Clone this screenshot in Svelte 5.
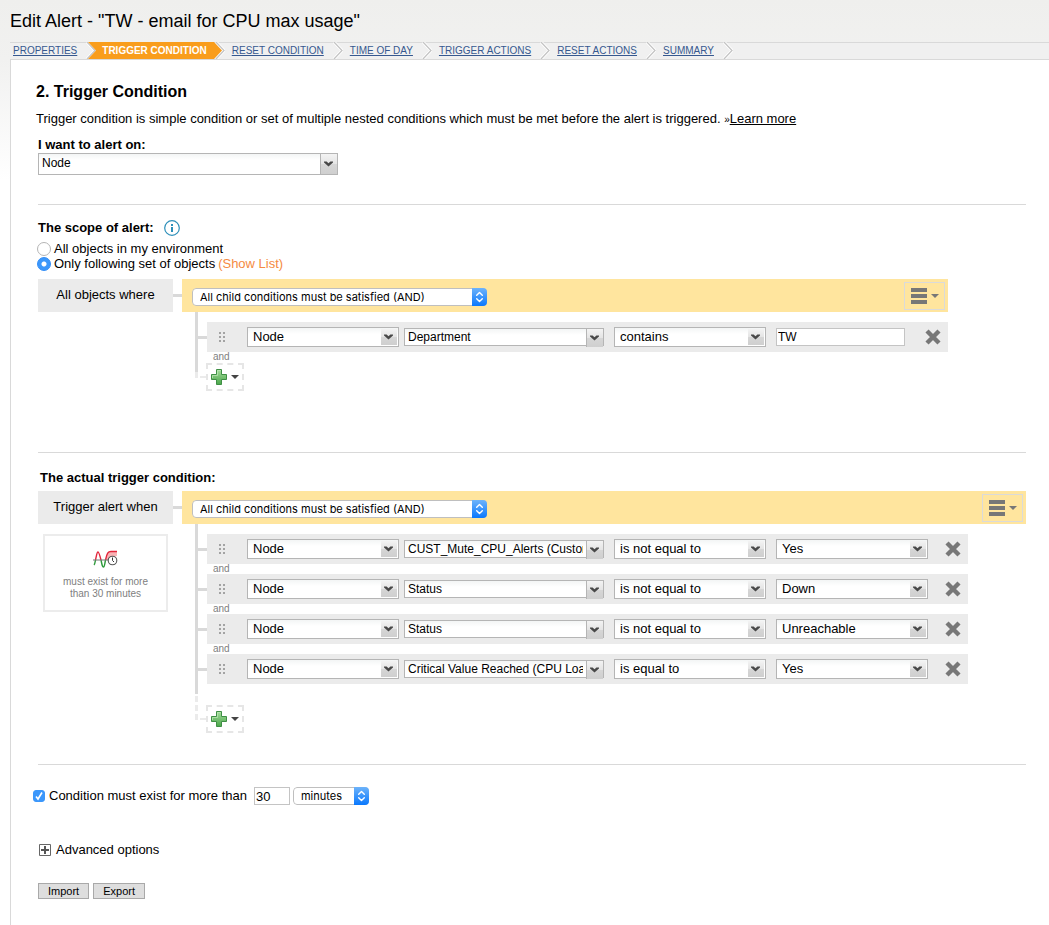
<script lang="ts">
    type Condition = { object: string; field: string; operator: string; value: string };

    const steps = ['Properties', 'Trigger Condition', 'Reset Condition', 'Time of Day', 'Trigger Actions', 'Reset Actions', 'Summary'];
    const fields = ['Department', 'Status', 'CUST_Mute_CPU_Alerts (Custom)', 'Critical Value Reached (CPU Load)'];
    const operators = ['contains', 'is equal to', 'is not equal to'];
    const values = ['Yes', 'No', 'Down', 'Unreachable'];

    let currentStep = $state('Trigger Condition');
    let alertOn = $state('Node');
    let scopeType = $state('set');
    let mustExist = $state(true);
    let duration = $state('30');
    let unit = $state('minutes');

    let scope = $state({
        match: 'and',
        freeText: true,
        rows: [{ object: 'Node', field: 'Department', operator: 'contains', value: 'TW' }] as Condition[],
    });

    let trigger = $state({
        match: 'and',
        freeText: false,
        rows: [
            { object: 'Node', field: 'CUST_Mute_CPU_Alerts (Custom)', operator: 'is not equal to', value: 'Yes' },
            { object: 'Node', field: 'Status', operator: 'is not equal to', value: 'Down' },
            { object: 'Node', field: 'Status', operator: 'is not equal to', value: 'Unreachable' },
            { object: 'Node', field: 'Critical Value Reached (CPU Load)', operator: 'is equal to', value: 'Yes' },
        ] as Condition[],
    });

    function addRow(group: { rows: Condition[] }) {
        group.rows.push({ object: 'Node', field: 'Status', operator: 'is equal to', value: 'Yes' });
    }
</script>

{#snippet arrow()}
    <span class="arrow">
        <svg width="9" height="6" viewBox="0 0 9 6"><path d="M0 0.5h2.6l1.9 1.7 1.9-1.7H9v1L4.5 5.6 0 1.5z" fill="#484848" /></svg>
    </span>
{/snippet}

{#snippet stepper()}
    <span class="stepper">
        <svg width="9" height="12" viewBox="0 0 9 12" fill="none" stroke="#fff" stroke-width="1.4" stroke-linecap="round" stroke-linejoin="round">
            <path d="M1.7 4.3L4.5 1.5l2.8 2.8M1.7 7.7l2.8 2.8 2.8-2.8" />
        </svg>
    </span>
{/snippet}

{#snippet caret(color: string)}
    <svg width="8" height="4" viewBox="0 0 8 4"><path d="M0 0h8L4 4z" fill={color} /></svg>
{/snippet}

{#snippet conditionGroup(group: { match: string; freeText: boolean; rows: Condition[] })}
    <div class="group" class:wide={!group.freeText}>
        <div class="group-head">
            <span class="mac-select match">
                <select bind:value={group.match} aria-label="Match type">
                    <option value="and">All child conditions must be satisfied (AND)</option>
                    <option value="or">At least one child condition must be satisfied (OR)</option>
                </select>
                {@render stepper()}
            </span>
            <button class="menu" aria-label="Group menu">
                <svg width="16" height="16" viewBox="0 0 16 16"><path d="M0 0h16v4H0zM0 6h16v4H0zM0 12h16v4H0z" fill="#777" /></svg>
                {@render caret('#777')}
            </button>
        </div>
        <ul class="tree">
            {#each group.rows as row, i}
                <li>
                    <span class="branch"></span>
                    <div class="row">
                        <svg class="grip" width="8" height="10" viewBox="0 0 8 10">
                            <path d="M1 0h2v2H1zM5 0h2v2H5zM1 4h2v2H1zM5 4h2v2H5zM1 8h2v2H1zM5 8h2v2H5z" fill="#a3a3a3" />
                        </svg>
                        <span class="combo">
                            <select bind:value={row.object} aria-label="Object">
                                <option>Node</option>
                                <option>Interface</option>
                            </select>
                            {@render arrow()}
                        </span>
                        <span class="combo field">
                            <select bind:value={row.field} aria-label="Field">
                                {#each fields as f}<option>{f}</option>{/each}
                            </select>
                            {@render arrow()}
                        </span>
                        <span class="combo operator">
                            <select bind:value={row.operator} aria-label="Operator">
                                {#each operators as o}<option>{o}</option>{/each}
                            </select>
                            {@render arrow()}
                        </span>
                        {#if group.freeText}
                            <input class="text" type="text" bind:value={row.value} aria-label="Value" />
                        {:else}
                            <span class="combo">
                                <select bind:value={row.value} aria-label="Value">
                                    {#each values as v}<option>{v}</option>{/each}
                                </select>
                                {@render arrow()}
                            </span>
                        {/if}
                        <button class="remove" aria-label="Remove condition" onclick={() => group.rows.splice(i, 1)}>
                            <svg width="16" height="16" viewBox="0 0 16 16"><path d="M2 2l12 12M14 2L2 14" stroke="#777" stroke-width="4.4" /></svg>
                        </button>
                    </div>
                </li>
                {#if group.freeText || i < group.rows.length - 1}
                    <li class="and">and</li>
                {/if}
            {/each}
        </ul>
        <div class="add-row">
            {#if group.freeText}
                <svg width="11" height="16" viewBox="0 0 11 16">
                    <path d="M0 0h3v10H0z" fill="#d9d9d9" />
                    <path d="M0 10h3v6H0zM5 14h6v2H5z" fill="#ebebeb" />
                </svg>
            {:else}
                <svg width="11" height="36" viewBox="0 0 11 36">
                    <path d="M0 0h3v10H0z" fill="#d9d9d9" />
                    <path d="M0 12h3v6H0zM0 21h3v6H0zM0 30h3v6H0zM5 34h6v2H5z" fill="#ebebeb" />
                </svg>
            {/if}
            <button class="add" aria-label="Add condition" onclick={() => addRow(group)}>
                <svg width="16" height="16" viewBox="0 0 16 16">
                    <defs>
                        <linearGradient id="plus" x1="0" y1="0" x2="0" y2="1">
                            <stop offset="0" stop-color="#a5dc9c" />
                            <stop offset="1" stop-color="#4aa64a" />
                        </linearGradient>
                    </defs>
                    <path d="M5.5 0.5h5v5h5v5h-5v5h-5v-5h-5v-5h5z" fill="url(#plus)" stroke="#3f8f45" />
                    <path d="M1.500 9V6.500h5v-5h3" fill="none" stroke="#b9e6b0" stroke-width="0.8" />
                </svg>
                {@render caret('#444')}
            </button>
        </div>
    </div>
{/snippet}

<header>
    <h1>Edit Alert - "TW - email for CPU max usage"</h1>
    <nav>
        {#each steps as step, i}
            <a href="#{step}" class:active={step === currentStep} onclick={() => (currentStep = step)}>{step}</a>
            <svg width="11" height="17" viewBox="0 0 11 17">
                <path d="M2 0l8 8.500L2 17" fill="none" stroke="#fff" stroke-width="3" />
                <path d="M2 0l8 8.500L2 17" fill="none" stroke="#c4c4c4" stroke-width="1.3" />
                {#if step === currentStep}
                    <path d="M0 0l8 8.500L0 17z" fill="#f99d1c" />
                {:else if steps[i + 1] === currentStep}
                    <path d="M3 0h8v17H3l8-8.500z" fill="#f99d1c" />
                {/if}
            </svg>
        {/each}
    </nav>
</header>

<main>
    <h2>2. Trigger Condition</h2>
    <p class="intro">
        Trigger condition is simple condition or set of multiple nested conditions which must be met before the alert is triggered.
        <small>»</small><a href="#learn">Learn more</a>
    </p>

    <section class="alert-on">
        <label for="alert-on">I want to alert on:</label>
        <span class="combo large">
            <select id="alert-on" bind:value={alertOn}>
                <option>Node</option>
                <option>Interface</option>
                <option>Volume</option>
            </select>
            {@render arrow()}
        </span>
    </section>

    <section class="scope">
        <h3>
            The scope of alert:
            <svg width="16" height="16" viewBox="0 0 16 16">
                <circle cx="8" cy="8" r="7.300" fill="#fff" stroke="#2d8fb9" stroke-width="1.2" />
                <path d="M7 4h2v2H7zM7 7h2v5H7z" fill="#2d8fb9" />
            </svg>
        </h3>
        <label class="option"><input type="radio" value="all" bind:group={scopeType} />All objects in my environment</label>
        <div class="option">
            <label class="option"><input type="radio" value="set" bind:group={scopeType} />Only following set of objects</label>
            <a class="show-list" href="#list">(Show List)</a>
        </div>
        <div class="builder">
            <div class="side">
                <div class="caption">All objects where</div>
            </div>
            <span class="link"></span>
            {@render conditionGroup(scope)}
        </div>
    </section>

    <section class="trigger">
        <h3>The actual trigger condition:</h3>
        <div class="builder">
            <div class="side">
                <div class="caption">Trigger alert when</div>
                <div class="summary">
                    <svg width="26" height="20" viewBox="0 0 26 20" fill="none">
                        <path d="M12.500 10C14 3 15 1.500 18 1.500h6V6l-6 1-3 3z" fill="#f9b3b5" />
                        <path d="M2.500 10C4 3 4 2 5 2s1.500 2 3 8M12.500 10C14 3 15 1.500 18 1.500h6" stroke="#e3263c" stroke-width="1.4" />
                        <path d="M1 15c.8-.6 1-2 1.500-5M8 10c1.200 6 1.500 7 2.500 7s1-2 2-7" stroke="#2c9a3a" stroke-width="1.4" />
                        <path d="M0 10h16" stroke="#777" />
                        <circle cx="19.500" cy="10.500" r="4.300" fill="#fff" stroke="#555" stroke-width="1.1" />
                        <path d="M19.500 7.500v3l1.500 1.500" stroke="#333" />
                    </svg>
                    <span>must exist for more than 30 minutes</span>
                </div>
            </div>
            <span class="link"></span>
            {@render conditionGroup(trigger)}
        </div>
    </section>

    <section class="options">
        <div class="duration">
            <label><input type="checkbox" bind:checked={mustExist} />Condition must exist for more than</label>
            <input class="text short" type="text" bind:value={duration} aria-label="Duration" />
            <span class="mac-select unit">
                <select bind:value={unit} aria-label="Unit">
                    <option>seconds</option>
                    <option>minutes</option>
                    <option>hours</option>
                </select>
                {@render stepper()}
            </span>
        </div>
        <button class="advanced">
            <svg width="12" height="12" viewBox="0 0 12 12">
                <path d="M0.500 0.500h11v11h-11z" fill="#fff" stroke="#666" />
                <path d="M5 2h2v3h3v2H7v3H5V7H2V5h3z" fill="#555" />
            </svg>
            Advanced options
        </button>
        <div class="buttons">
            <button>Import</button>
            <button>Export</button>
        </div>
    </section>
</main>

<style>
    :global(body) {
        background: linear-gradient(#efefed, #f1f1f0 60px, #fff 180px) no-repeat;
        font: 13px/16px "Liberation Sans", Arial, sans-serif;
        color: #000;
    }

    h1, h2, h3, p, ul {
        margin: 0;
        padding: 0;
    }

    svg {
        display: block;
        flex: none;
    }

    button, select, input {
        font: inherit;
        color: inherit;
        box-sizing: border-box;
        margin: 0;
    }

    button {
        padding: 0;
        border: none;
        background: none;
        cursor: pointer;
    }

    header {
        padding-left: 10px;
    }

    h1 {
        font-size: 18px;
        font-weight: normal;
        line-height: 42px;
    }

    /* Wizard steps */
    nav {
        display: flex;
        height: 17px;
        background: #f0f0f0;
        box-shadow: inset 0 1px #d9d9d9;
    }

    nav a {
        padding: 0 8px 0 7px;
        font-size: 10px;
        line-height: 17px;
        text-transform: uppercase;
        white-space: nowrap;
        color: #36588f;
    }

    nav a:first-child {
        padding-left: 3px;
    }

    nav a.active {
        padding: 0 7px 0 6px;
        background: #f99d1c;
        color: #fff;
        font-weight: bold;
        text-decoration: none;
    }

    main {
        box-sizing: border-box;
        min-height: calc(100vh - 59px);
        margin-left: 10px;
        padding: 22px 23px 26px 25px;
        border: solid #d9d9d9;
        border-width: 1px 0 0 1px;
        background: #fff;
    }

    h2 {
        font-size: 16px;
        line-height: 20px;
    }

    h3 {
        display: flex;
        align-items: center;
        gap: 10px;
        margin-bottom: 5px;
        font-size: 13px;
    }

    .intro {
        margin-top: 9px;
    }

    .intro small {
        font-size: 10px;
        line-height: 10px;
    }

    .intro a {
        color: #000;
    }

    section {
        margin-left: 2px;
    }

    section + section {
        border-top: 1px solid #d9d9d9;
    }

    .alert-on {
        margin-top: 10px;
        padding-bottom: 29px;
    }

    .alert-on label {
        display: block;
        font-weight: bold;
    }

    .scope {
        padding: 15px 0 61px;
    }

    .trigger {
        padding: 17px 0 31px;
    }

    .trigger h3 {
        margin-left: 2px;
    }

    .option {
        display: flex;
        align-items: center;
        line-height: 15px;
    }

    .show-list {
        margin-left: 3px;
        color: #f58a42;
        text-decoration: none;
    }

    input[type="radio"],
    input[type="checkbox"] {
        appearance: none;
        flex: none;
        background: #fff;
        border: 1px solid #b5b5b5;
    }

    input[type="radio"] {
        width: 14px;
        height: 14px;
        margin: 0 3px 0 -1px;
        border-radius: 50%;
    }

    input[type="radio"]:checked {
        border-color: #2f8cf7;
        background: radial-gradient(circle, #fff 2px, #3b97fb 3px);
    }

    input[type="checkbox"] {
        width: 12px;
        height: 12px;
        margin-right: 4px;
        border-radius: 3px;
    }

    input[type="checkbox"]:checked {
        border-color: #3b97fb;
        background: #3b97fb url("data:image/svg+xml,%3Csvg xmlns='http://www.w3.org/2000/svg' viewBox='0 0 10 10'%3E%3Cpath d='M2 5.500l2 2.500 4-6.500' fill='none' stroke='%23fff' stroke-width='1.600'/%3E%3C/svg%3E");
    }

    /* Condition builder */
    .builder {
        display: flex;
        align-items: flex-start;
    }

    .option + .builder {
        margin-top: 8px;
    }

    .side {
        flex: none;
        width: 135px;
    }

    .caption {
        height: 33px;
        line-height: 32px;
        background: #ebebeb;
        text-align: center;
    }

    .summary {
        display: flex;
        flex-direction: column;
        align-items: center;
        gap: 6px;
        box-sizing: border-box;
        height: 78px;
        margin: 10px 5px 0;
        padding: 14px 16px 0;
        border: 2px solid #ececec;
        font-size: 10px;
        line-height: 12px;
        text-align: center;
        color: #808080;
    }

    .link,
    .branch {
        flex: none;
        width: 9px;
        height: 3px;
        background: #d9d9d9;
    }

    .link {
        margin-top: 15px;
    }

    .group.wide {
        flex: 1;
    }

    .group-head {
        display: flex;
        align-items: center;
        justify-content: space-between;
        height: 33px;
        padding: 0 3px 0 10px;
        box-sizing: border-box;
        background: #ffe59e;
    }

    .menu {
        display: flex;
        align-items: center;
        justify-content: center;
        gap: 4px;
        width: 41px;
        height: 28px;
        border: 1px solid #dadada;
    }

    .tree {
        margin-left: 13px;
        padding-top: 10px;
        border-left: 3px solid #d9d9d9;
        list-style: none;
    }

    .tree li {
        display: flex;
        align-items: center;
    }

    .tree .and {
        height: 10px;
        padding-left: 15px;
        font-size: 10px;
        line-height: 10px;
        color: #808080;
    }

    .row {
        display: flex;
        align-items: center;
        height: 30px;
        padding: 0 7px 0 11px;
        background: #ebebeb;
    }

    .grip {
        margin-right: 21px;
    }

    .combo,
    .mac-select {
        display: grid;
        box-sizing: border-box;
    }

    .combo select,
    .mac-select select {
        grid-area: 1 / 1;
        appearance: none;
        min-width: 0;
        width: 100%;
        border: none;
        border-radius: 0;
        background: none;
        outline: none;
    }

    .combo {
        width: 152px;
        height: 20px;
        border: 1px solid #b5b5b5;
        background: linear-gradient(#f3f5f5, #fff 6px);
    }

    .combo select {
        padding: 0 20px 0 5px;
    }

    .arrow,
    .stepper {
        grid-area: 1 / 1;
        justify-self: end;
        display: flex;
        align-items: center;
        justify-content: center;
        pointer-events: none;
    }

    .arrow {
        width: 15px;
        margin: 1px;
        padding-right: 1px;
        background: linear-gradient(#f3f3f3, #e4e4e4 50%, #d6d6d6 50%, #cfcfcf);
    }

    .combo.large {
        width: 300px;
        height: 22px;
        font-size: 12px;
    }

    .combo.field {
        width: 200px;
        height: 18px;
        margin: 0 10px 0 5px;
        font-size: 12px;
    }

    .combo.operator {
        margin-right: 10px;
    }

    .combo.large select,
    .combo.field select {
        padding: 0 20px 2px 3px;
    }

    .combo.large .arrow,
    .combo.field .arrow {
        margin: 0;
        border-left: 1px solid #b5b5b5;
    }

    .text {
        width: 129px;
        height: 18px;
        margin-right: 3px;
        padding: 0 1px;
        border: 1px solid #c4c4c4;
        background: #fff;
        font-size: 12px;
    }

    .remove {
        margin-left: 17px;
    }

    .mac-select {
        height: 18px;
        border-radius: 4px;
        overflow: hidden;
        font: 11px/14px Inter, sans-serif;
    }

    .mac-select select {
        padding: 0 18px 0 7px;
        border: 1px solid #bfbfbf;
        border-radius: 4px;
        background: #fff;
    }

    .match {
        width: 295px;
        margin-top: 2px;
    }

    .unit {
        width: 76px;
    }

    .stepper {
        width: 15px;
        background: linear-gradient(#6db3fa, #0a78fd);
    }

    .add-row {
        display: flex;
        align-items: flex-start;
        margin-left: 13px;
    }

    .add {
        display: flex;
        align-items: center;
        justify-content: center;
        gap: 4px;
        width: 38px;
        height: 28px;
        margin-top: 1px;
        border: 2px dashed #e6e6e6;
    }

    .wide .add {
        margin-top: 21px;
    }

    .options {
        padding-top: 22px;
    }

    .duration {
        display: flex;
        align-items: center;
        margin-left: -5px;
    }

    .duration label {
        display: flex;
        align-items: center;
    }

    .text.short {
        width: 36px;
        margin-left: 7px;
        font-size: 13px;
    }

    .advanced {
        display: flex;
        align-items: center;
        gap: 5px;
        margin: 37px 0 25px 1px;
    }

    .buttons {
        display: flex;
        gap: 4px;
    }

    .buttons button {
        height: 16px;
        padding: 0 9px;
        border: 1px solid #a9a9a9;
        background: #dedede;
        font-size: 11px;
        line-height: 14px;
    }
</style>
